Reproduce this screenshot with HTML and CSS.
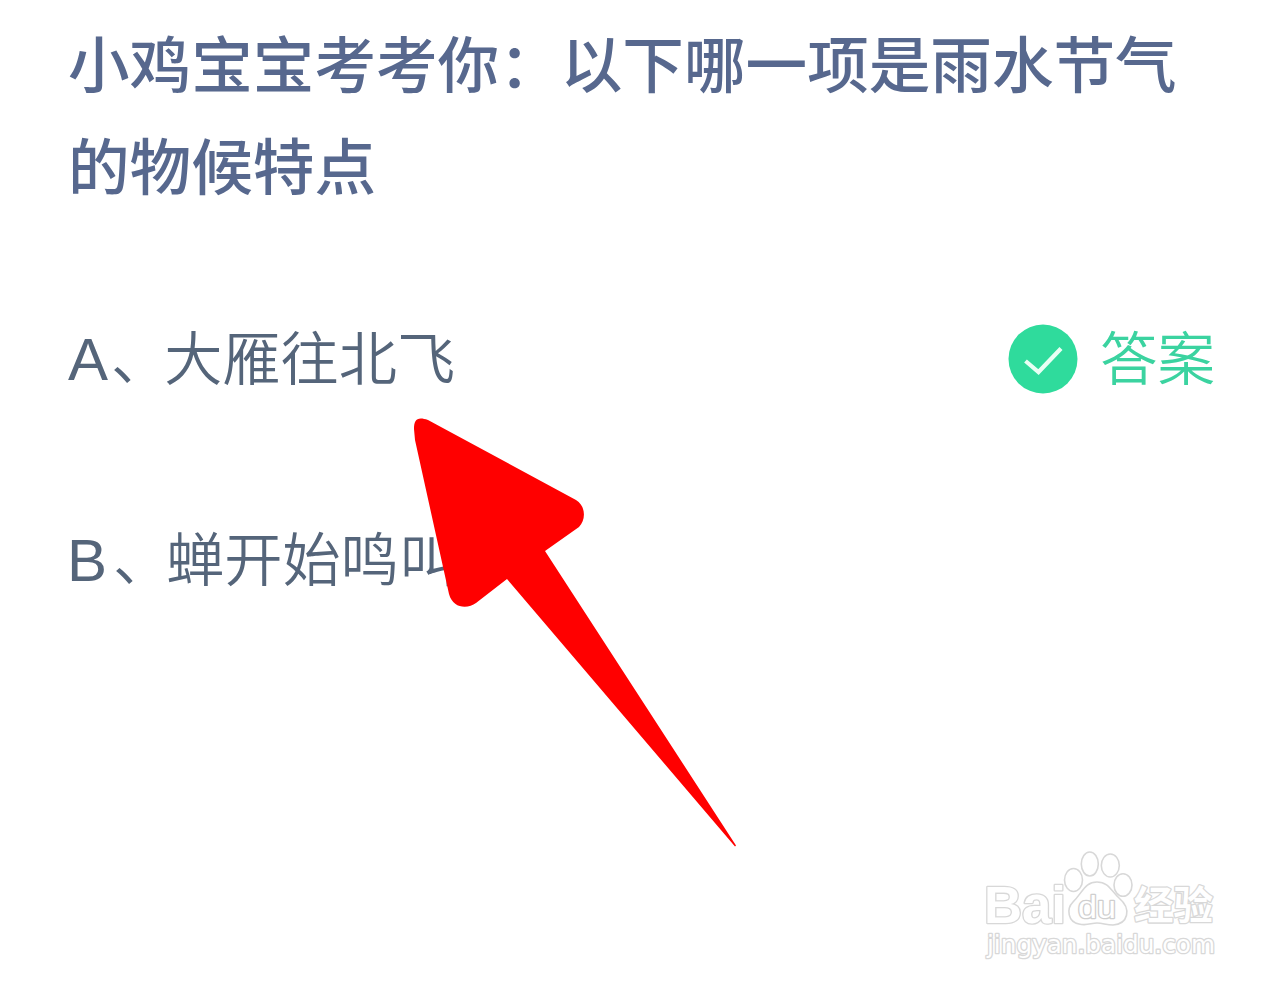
FILE: index.html
```html
<!DOCTYPE html>
<html lang="zh-CN">
<head>
<meta charset="UTF-8" />
<meta name="viewport" content="width=device-width, initial-scale=1.0" />
<title>小鸡宝宝考考你</title>
<link rel="stylesheet" href="styles.css">
</head>
<body>

<main class="quiz">
  <h1 class="question">小鸡宝宝考考你：以下哪一项是雨水节气的物候特点</h1>

  <ul class="options">
    <li class="option">
      <span class="option-text"><span class="letter">A</span><span class="comma">、</span>大雁往北飞</span>
      <span class="answer">
        <svg class="check" viewBox="0 0 70 70">
          <circle cx="35" cy="35" r="34.5" fill="#2fdb9c" />
          <path d="M17.500 37 L30.500 48 L53 24.500" fill="none" stroke="#e8fff4" stroke-width="4.200" />
        </svg>
        <span class="answer-text">答案</span>
      </span>
    </li>
    <li class="option">
      <span class="option-text"><span class="letter letter-b">B</span><span class="comma">、</span>蝉开始鸣叫</span>
    </li>
  </ul>
</main>

<svg class="arrow" viewBox="0 0 324 432">
  <path d="M3 13 C3 4 6 0 17 4 L165 84 C175 90 175 104 168 111 L134 135 L325 429.500 L324 430.500 L96 163 L65 187 C57 193 42 193 38 178 L4 24 Z" fill="#ff0000" />
</svg>

<svg class="watermark" viewBox="0 0 270 130">
  <g class="wm-outline">
    <text class="wm-brand" x="14" y="83" textLength="82" lengthAdjust="spacingAndGlyphs">Bai</text>
    <ellipse cx="103.500" cy="40" rx="9" ry="11.500" />
    <ellipse cx="119.800" cy="24" rx="8.500" ry="12" />
    <ellipse cx="140.300" cy="25.500" rx="9" ry="11.500" />
    <ellipse cx="153" cy="45" rx="9" ry="11.300" />
    <path d="M127 42 C139 42 141 51 149 58 C162 69 158 84 143 85 C136 85 133 83 127 83 C121 83 117 86 109 84 C98 82 96 69 103 62 C113 52 115 42 127 42 Z" />
    <text class="wm-du" x="108" y="78" textLength="38" lengthAdjust="spacingAndGlyphs">du</text>
    <text class="wm-cn" x="164" y="79" textLength="79" lengthAdjust="spacingAndGlyphs">经验</text>
    <text class="wm-url" x="17" y="113" textLength="228" lengthAdjust="spacingAndGlyphs">jingyan.baidu.com</text>
  </g>
</svg>

</body>
</html>
```
FILE: styles.css
```css
body {
  margin: 0;
  height: 989px;
  position: relative;
  overflow: hidden;
  background-color: #fff;
  font-family: "Noto Sans CJK SC", sans-serif;
}

.quiz {
  padding: 11px 69px 0 68px;
}

.question {
  margin: 0;
  width: 1130px;
  color: #57688e;
  font-size: 61.6px;
  font-weight: 500;
  line-height: 102px;
}

.options {
  list-style: none;
  margin: 93px 0 0;
  padding: 0;
}

.option {
  display: flex;
  align-items: center;
  justify-content: space-between;
  height: 102px;
  margin-bottom: 99px;
}

.option-text {
  margin-top: -8px;
  color: #55657a;
  font-size: 58.2px;
  font-weight: 350;
  line-height: 102px;
}

.letter {
  display: inline-block;
  width: 38px;
  font-family: "Liberation Sans", sans-serif;
  font-size: 60px;
  line-height: 1;
}

.letter-b {
  width: 40px;
  text-indent: -1px;
}

.comma {
  margin: 0 -5px 0 5px;
}

.answer {
  display: flex;
  align-items: center;
  gap: 22px;
}

.check {
  width: 70px;
  height: 70px;
}

.answer-text {
  margin-top: -8px;
  color: #3bd3a0;
  font-size: 57.5px;
  font-weight: 350;
  line-height: 102px;
}

.arrow {
  position: absolute;
  left: 411px;
  top: 416px;
  width: 324px;
  height: 432px;
  overflow: visible;
}

.watermark {
  position: absolute;
  left: 970px;
  top: 840px;
  width: 270px;
  height: 130px;
}

.wm-outline {
  fill: #fff;
  stroke: #d8d8d8;
  stroke-width: 1.6px;
}

.wm-outline text {
  paint-order: stroke;
  stroke-width: 2.6px;
  stroke-linejoin: round;
}

.wm-brand {
  font-family: "Liberation Sans", sans-serif;
  font-size: 51px;
  font-weight: bold;
}

.wm-outline .wm-du {
  font-family: "Liberation Sans", sans-serif;
  font-size: 32px;
  stroke: #cfcfcf;
}

.wm-cn {
  font-size: 39px;
  font-weight: bold;
}

.wm-url {
  font-family: "DejaVu Sans", sans-serif;
  font-size: 24px;
}
```
